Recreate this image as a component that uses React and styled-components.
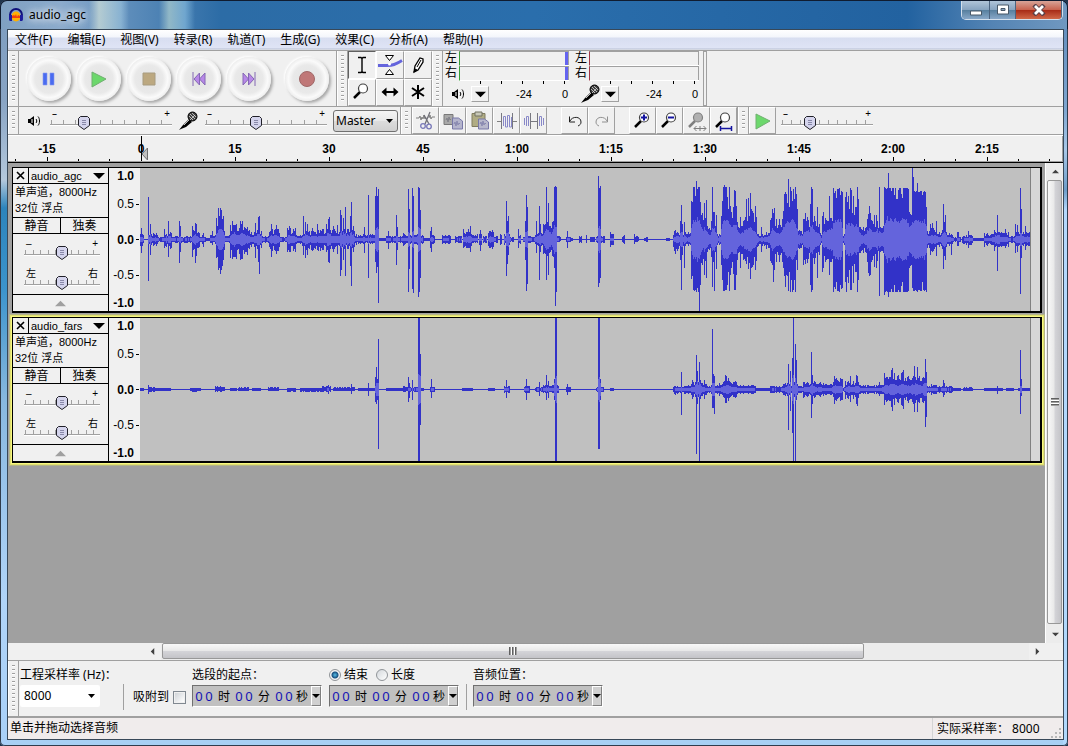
import React from 'react';
import styled, { createGlobalStyle, css } from 'styled-components';

const WAVE_WIDTH = 890;
const WAVE_HEIGHT = 143;
const WAVE_MIDDLE = 71;

// floor of the signal: from, to, up, down
const agcFloor = [
  [0, 2, 10, 12], [3, 3, 5, 4], [9, 17, 5, 5], [18, 24, 2, 2], [25, 31, 6, 8], [32, 38, 3, 3],
  [41, 45, 2, 3], [46, 51, 4, 4], [52, 59, 10, 12], [60, 65, 4, 4], [66, 69, 1, 1], [70, 75, 5, 4],
  [76, 84, 14, 18], [85, 89, 4, 3], [90, 107, 14, 17], [108, 121, 8, 8], [122, 128, 3, 3],
  [129, 139, 10, 11], [140, 146, 2, 2], [147, 155, 10, 11], [156, 161, 4, 4], [162, 180, 8, 10],
  [181, 192, 10, 10], [193, 214, 9, 8], [215, 222, 4, 4], [223, 234, 5, 4], [239, 245, 1, 1],
  [246, 262, 3, 3], [263, 283, 5, 5], [284, 289, 1, 1], [290, 294, 4, 4], [302, 310, 4, 4],
  [315, 321, 3, 3], [323, 331, 7, 8], [332, 337, 4, 3], [339, 341, 5, 5], [343, 346, 3, 3],
  [348, 353, 9, 9], [354, 357, 3, 3], [360, 361, 4, 4], [364, 369, 5, 5], [370, 373, 2, 2],
  [378, 380, 4, 4], [383, 394, 3, 3], [395, 402, 6, 6], [403, 414, 17, 16], [417, 420, 3, 2],
  [426, 432, 2, 2], [439, 441, 3, 3], [450, 454, 2, 2], [456, 464, 3, 3], [470, 473, 5, 5],
  [482, 484, 4, 4], [494, 498, 3, 2], [504, 507, 2, 2], [526, 529, 1, 1], [533, 544, 8, 12],
  [545, 550, 7, 6], [551, 566, 34, 33], [567, 576, 16, 15], [577, 580, 5, 5], [581, 596, 32, 34],
  [597, 603, 16, 18], [604, 616, 27, 26], [617, 629, 6, 8], [630, 642, 20, 22], [643, 657, 36, 36],
  [658, 662, 8, 8], [663, 674, 21, 22], [675, 679, 18, 18], [680, 681, 5, 4], [682, 692, 25, 26],
  [693, 702, 51, 52], [703, 704, 5, 5], [705, 718, 38, 38], [719, 725, 12, 13], [726, 737, 22, 25],
  [738, 743, 12, 12], [744, 768, 51, 52], [769, 771, 24, 25], [772, 786, 48, 51], [787, 793, 10, 10],
  [794, 806, 8, 8], [807, 812, 5, 5], [813, 820, 2, 2], [822, 832, 4, 5], [833, 843, 1, 1],
  [844, 853, 5, 5], [854, 868, 8, 8], [869, 874, 3, 3], [875, 889, 9, 8],
];

// single columns that stand out: x, up, down
const agcPeaks = [
  [8, 42, 41], [10, 15, 15], [24, 10, 8], [28, 18, 17], [39, 18, 23], [40, 13, 12], [52, 13, 17],
  [55, 16, 23], [56, 15, 16], [63, 6, 7], [72, 8, 5], [76, 21, 18], [78, 31, 30], [79, 23, 28],
  [80, 31, 34], [81, 29, 30], [82, 20, 26], [83, 23, 20], [92, 18, 19], [100, 18, 20], [102, 18, 19],
  [105, 11, 12], [115, 16, 18], [118, 22, 22], [119, 23, 34], [131, 15, 17], [136, 14, 14],
  [149, 13, 12], [163, 23, 15], [165, 17, 18], [167, 15, 15], [172, 11, 11], [177, 15, 10],
  [186, 15, 12], [188, 20, 22], [189, 22, 23], [193, 13, 12], [197, 14, 14], [200, 29, 36],
  [201, 24, 30], [203, 21, 20], [205, 32, 36], [210, 23, 26], [211, 37, 46], [213, 13, 12],
  [224, 12, 13], [228, 44, 38], [235, 43, 22], [236, 52, 33], [237, 43, 27], [238, 50, 63],
  [248, 8, 9], [256, 24, 25], [257, 12, 10], [268, 50, 52], [269, 30, 29], [272, 51, 49],
  [273, 43, 53], [278, 52, 57], [279, 51, 52], [280, 29, 38], [290, 8, 8], [291, 12, 12],
  [323, 10, 8], [328, 10, 8], [330, 13, 12], [340, 9, 11], [360, 5, 5], [366, 38, 36],
  [367, 18, 24], [368, 23, 15], [378, 10, 8], [385, 18, 20], [386, 44, 51], [387, 32, 44],
  [396, 18, 13], [399, 33, 40], [400, 15, 12], [406, 52, 40], [408, 36, 35], [414, 52, 28],
  [415, 53, 66], [416, 52, 52], [427, 8, 8], [446, 4, 3], [458, 63, 47], [459, 51, 43],
  [460, 53, 38], [470, 7, 7], [494, 5, 4], [540, 18, 20], [541, 34, 50], [542, 15, 15],
  [544, 17, 28], [551, 38, 39], [553, 52, 50], [554, 52, 51], [555, 43, 50], [556, 58, 52],
  [557, 50, 48], [558, 52, 52], [559, 52, 71], [560, 37, 45], [572, 52, 47], [573, 27, 22],
  [574, 27, 51], [576, 24, 29], [582, 38, 40], [583, 52, 51], [584, 54, 51], [585, 52, 50],
  [586, 52, 50], [587, 42, 45], [589, 52, 51], [594, 49, 50], [595, 48, 50], [600, 22, 28],
  [606, 40, 24], [608, 41, 29], [610, 46, 39], [615, 33, 30], [621, 12, 12], [632, 30, 25],
  [633, 26, 42], [634, 31, 30], [644, 45, 36], [645, 47, 47], [646, 45, 35], [648, 60, 51],
  [650, 52, 52], [651, 48, 40], [652, 38, 52], [653, 50, 50], [655, 52, 52], [656, 45, 20],
  [663, 20, 25], [665, 26, 24], [670, 35, 45], [671, 52, 52], [672, 50, 50], [677, 32, 38],
  [682, 23, 32], [689, 43, 35], [706, 47, 52], [710, 51, 50], [711, 49, 50], [717, 52, 52],
  [728, 25, 33], [729, 33, 36], [730, 26, 35], [739, 52, 56], [744, 52, 55], [748, 66, 57],
  [756, 40, 52], [757, 40, 52], [772, 71, 48], [773, 62, 51], [777, 56, 52], [782, 44, 42],
  [786, 32, 52], [790, 15, 15], [792, 16, 12], [796, 18, 16], [803, 35, 29], [804, 17, 16],
  [805, 24, 20], [811, 5, 15], [817, 7, 6], [818, 7, 6], [828, 8, 8], [844, 6, 7], [854, 9, 11],
  [857, 24, 31], [865, 10, 8], [875, 15, 13], [877, 14, 12], [880, 51, 54], [881, 30, 18],
  [885, 13, 10],
];

const farsFloor = [
  [0, 3, 1, 1], [8, 14, 2, 2], [15, 30, 1, 1], [50, 60, 1, 2], [75, 84, 3, 2], [90, 96, 1, 1],
  [98, 108, 2, 1], [112, 120, 1, 1], [128, 138, 2, 1], [147, 155, 1, 2], [160, 181, 1, 2],
  [182, 190, 3, 2], [193, 214, 2, 1], [218, 234, 1, 1], [246, 262, 1, 1], [263, 267, 3, 2],
  [270, 283, 2, 2], [290, 294, 2, 2], [322, 332, 1, 1], [348, 354, 1, 1], [364, 369, 3, 3],
  [384, 389, 3, 3], [395, 402, 2, 2], [403, 418, 4, 3], [426, 430, 2, 2], [456, 463, 2, 2],
  [470, 473, 1, 1], [533, 545, 3, 4], [546, 551, 4, 4], [552, 565, 8, 8], [566, 577, 4, 4],
  [578, 582, 6, 6], [583, 588, 12, 12], [589, 596, 7, 7], [597, 615, 4, 4], [616, 629, 1, 1],
  [630, 642, 3, 3], [643, 657, 6, 6], [658, 662, 3, 3], [663, 679, 7, 7], [680, 692, 6, 6],
  [693, 702, 10, 10], [703, 704, 2, 2], [705, 718, 7, 8], [719, 743, 4, 4], [744, 768, 15, 14],
  [769, 771, 9, 9], [772, 786, 14, 15], [787, 798, 4, 4], [799, 812, 3, 3], [813, 820, 1, 1],
  [823, 832, 2, 1], [844, 862, 1, 1], [866, 873, 1, 1], [878, 889, 1, 1],
];

const farsPeaks = [
  [8, 4, 4], [188, 4, 4], [211, 5, 4], [228, 6, 6], [235, 12, 12], [236, 22, 14], [237, 10, 10],
  [238, 50, 59], [268, 12, 12], [269, 6, 8], [272, 9, 10], [278, 71, 71], [279, 71, 71],
  [280, 35, 35], [291, 10, 8], [366, 9, 8], [386, 10, 10], [399, 7, 6], [406, 14, 10],
  [408, 8, 8], [414, 10, 10], [415, 71, 71], [416, 71, 71], [427, 5, 5], [458, 71, 59],
  [459, 71, 59], [460, 10, 10], [541, 17, 25], [556, 34, 64], [557, 18, 14], [559, 27, 71],
  [572, 60, 18], [573, 15, 18], [574, 13, 24], [585, 14, 13], [648, 25, 40], [650, 18, 21],
  [652, 31, 43], [653, 71, 71], [655, 45, 71], [656, 29, 10], [663, 7, 8], [671, 37, 28],
  [672, 14, 14], [694, 13, 14], [710, 13, 12], [716, 14, 14], [717, 13, 16], [739, 7, 6],
  [751, 19, 17], [752, 21, 21], [763, 19, 19], [774, 23, 22], [777, 22, 22], [785, 30, 37],
  [786, 17, 27], [803, 9, 7], [804, 6, 5], [857, 3, 4], [880, 39, 24], [881, 10, 6],
];

const jitter = (n) => {
  const v = Math.sin(n * 12.9898) * 43758.5453;
  return v - Math.floor(v);
};

const buildWave = (floor, peaks) => {
  const columns = Array.from({ length: WAVE_WIDTH }, () => [0, 0]);
  floor.forEach(([from, to, up, down]) => {
    for (let x = from; x <= to; x += 1) {
      // loud parts are nearly flat on top
      const size = up > 45 ? 1 - jitter(x) ** 4 * 0.2 : 0.5 + jitter(x) * 0.65;
      columns[x] = [Math.round(up * size), Math.round(down * size)];
    }
  });
  peaks.forEach(([x, up, down]) => {
    columns[x] = [up, down];
  });

  let peakPath = '';
  let rmsPath = '';
  columns.forEach(([up, down], x) => {
    const near = columns.slice(Math.max(0, x - 2), x + 3);
    const mean = near.reduce((sum, c) => sum + c[0] + c[1], 0) / near.length / 2;
    const share = 0.34 + jitter(x + 7) * 0.1;
    const rms = Math.floor(Math.min(mean * share, up * 0.6, down * 0.6));
    peakPath += `M${x} ${WAVE_MIDDLE - up}h1v${up + down + 1}h-1z`;
    if (rms > 0) {
      rmsPath += `M${x} ${WAVE_MIDDLE - rms}h1v${rms * 2 + 1}h-1z`;
    }
  });
  return { peakPath, rmsPath };
};

const tracks = [
  { name: 'audio_agc', selected: false, wave: buildWave(agcFloor, agcPeaks) },
  { name: 'audio_fars', selected: true, wave: buildWave(farsFloor, farsPeaks) },
];

const menus = ['文件(F)', '编辑(E)', '视图(V)', '转录(R)', '轨道(T)', '生成(G)', '效果(C)', '分析(A)', '帮助(H)'];
const marks = ['-15', '0', '15', '30', '45', '1:00', '1:15', '1:30', '1:45', '2:00', '2:15', ''];

/* icons */

const Logo = () => (
  <svg width="16" height="16" viewBox="0 0 16 16">
    <path d="M2 10V8a6 6 0 0 1 12 0v2" fill="none" stroke="#10107a" strokeWidth="2" />
    <ellipse cx="8" cy="9.500" rx="4.500" ry="5" fill="#ffb000" />
    <path d="M4 9l2-1 1 1 1-2 1 3 1-2 2 1v2H4z" fill="#f04010" />
    <path d="M1 8h3v6H2a2 2 0 0 1-1-2zM15 8h-3v6h2a2 2 0 0 0 1-2z" fill="#1c1c9c" />
  </svg>
);

const PauseIcon = () => (
  <svg width="16" height="16" viewBox="0 0 16 16">
    <path d="M2 2h4v12H2zM9 2h4v12H9z" fill="#4a6cf0" stroke="#8c9cf0" strokeWidth="0.600" />
  </svg>
);
const PlayIcon = () => (
  <svg width="18" height="18" viewBox="0 0 18 18">
    <path d="M2 2l14 7-14 8z" fill="#6cd86c" stroke="#70b070" strokeWidth="1" />
  </svg>
);
const StopIcon = () => (
  <svg width="16" height="16" viewBox="0 0 16 16">
    <path d="M2 2h12v12H2z" fill="#bca880" stroke="#a89c80" />
  </svg>
);
const BackIcon = () => (
  <svg width="16" height="16" viewBox="0 0 16 16">
    <path d="M2 1v14M8.500 2v12L3 8zM14 2v12L8.500 8z" fill="#b888e8" stroke="#8468b4" />
  </svg>
);
const ForwardIcon = () => (
  <svg width="16" height="16" viewBox="0 0 16 16">
    <path d="M14 1v14M7.500 2v12L13 8zM2 2v12L7.500 8z" fill="#b888e8" stroke="#8468b4" />
  </svg>
);
const RecordIcon = () => (
  <svg width="18" height="18" viewBox="0 0 18 18">
    <circle cx="9" cy="9" r="7.500" fill="#c07878" stroke="#a06868" />
  </svg>
);

const BeamIcon = () => (
  <svg width="22" height="22" viewBox="0 0 22 22">
    <path d="M7 3.500h3l1 1 1-1h3M7 18.500h3l1-1 1 1h3M11 4v14" fill="none" stroke="#000" strokeWidth="1.400" />
  </svg>
);
const EnvelopeIcon = () => (
  <svg width="26" height="24" viewBox="0 0 26 24">
    <path d="M1 12.500h9c6 0 8-1 15-5" fill="none" stroke="#6464dc" strokeWidth="3" />
    <path d="M8.500 2.500h8l-4 5zM8.500 21.500h8l-4-5z" fill="#fff" stroke="#000" />
    <circle cx="12.500" cy="11" r="1.500" fill="#fff" />
  </svg>
);
const PencilIcon = () => (
  <svg width="20" height="20" viewBox="0 0 20 20">
    <path d="M6 17l1-6 5-8 3 1v3l-5 8z" fill="#fff" stroke="#000" strokeWidth="1.300" />
    <path d="M9 12l4-7M6 17l1-3 2 1z" fill="#000" stroke="#000" />
  </svg>
);
const MoveIcon = () => (
  <svg width="20" height="20" viewBox="0 0 20 20">
    <path d="M3 10h14" stroke="#000" strokeWidth="2" />
    <path d="M1.500 10l5-4.500v9zM18.500 10l-5-4.500v9z" fill="#000" />
  </svg>
);
const StarIcon = () => (
  <svg width="20" height="20" viewBox="0 0 20 20">
    <path d="M10 3v14M4 6l12 8M16 6L4 14" fill="none" stroke="#000" strokeWidth="2" />
  </svg>
);

const lensMarks = {
  plus: <path d="M9 7.500h6M12 4.500v6" stroke="#1414a0" strokeWidth="2" />,
  minus: <path d="M9 7.500h6" stroke="#1414a0" strokeWidth="2" />,
  selection: <path d="M8 18.500h12M10.500 16L8 18.500l2.500 2.500M17.500 16l2.500 2.500-2.500 2.500M14 16v5" fill="none" stroke="#808080" />,
  project: <path d="M7 18.500h12M7.500 16v5M18.500 16v5" fill="none" stroke="#1414a0" strokeWidth="1.500" />,
};
const ZoomIcon = ({ kind }) => {
  const dim = kind === 'selection';
  return (
    <svg width="22" height="22" viewBox="0 0 22 22">
      <path d="M9 11l-6 6" stroke={dim ? '#808080' : '#000'} strokeWidth="2.500" />
      <circle cx="12" cy="7.500" r="4.500" fill={dim ? '#b0b0b0' : '#fff'} stroke={dim ? '#808080' : '#404040'} strokeWidth="1.200" />
      {lensMarks[kind]}
    </svg>
  );
};

const SpeakerIcon = () => (
  <svg width="16" height="16" viewBox="0 0 16 16">
    <path d="M2 6h2l4-3v10L4 10H2z" fill="#000" />
    <path d="M6 6v4" stroke="#fff" />
    <path d="M10 6c1 1 1 3 0 4M12 3.500c2 2 2 7 0 9" fill="none" stroke="#000" />
  </svg>
);
const MicIcon = () => (
  <svg width="21" height="20" viewBox="0 0 21 20">
    <path d="M1 19l4-5 6-6 3 3-6 5-5 2z" fill="#000" />
    <path d="M6 14l5-5" stroke="#c0c0c0" />
    <circle cx="14.500" cy="5.500" r="4.500" fill="#404040" stroke="#000" />
    <path d="M12 3l5 5M14 2l4 4M11 5l4 4M17 4l-5 5" stroke="#d8d8d8" strokeWidth="0.800" />
  </svg>
);

const CutIcon = () => (
  <svg width="22" height="22" viewBox="0 0 22 22">
    <path d="M1 8h3l1-2 1 4 1-3 1 2 1-4 1 4 1-2M14 8l1-3 1 4 1-2h3" fill="none" stroke="#808080" />
    <path d="M15 2l-5 12M9 5l5 9" stroke="#707078" strokeWidth="1.300" />
    <circle cx="8" cy="16" r="2.300" fill="none" stroke="#7878b8" strokeWidth="1.300" />
    <circle cx="14" cy="16.500" r="2.300" fill="none" stroke="#7878b8" strokeWidth="1.300" />
  </svg>
);
const CopyIcon = () => (
  <svg width="22" height="22" viewBox="0 0 22 22">
    <path d="M2 4.500h9v10H2z" fill="#a8a8a8" stroke="#787878" />
    <path d="M4 10l1-2 1 4 1-5 1 3 1-1" fill="none" stroke="#808088" />
    <path d="M10.500 8h6l4 3v8h-10z" fill="#b4b4cc" stroke="#7878a8" />
    <path d="M12 14l1-2 1 4 1-5 1 4 1-2 1 1" fill="none" stroke="#8888b0" />
  </svg>
);
const PasteIcon = () => (
  <svg width="22" height="22" viewBox="0 0 22 22">
    <path d="M3 3.500h13v13H3z" fill="#b0ac84" stroke="#807c60" />
    <path d="M6 2h7v4H6z" fill="#c8c8b8" stroke="#707060" />
    <path d="M9.500 9h6l4 3v7h-10z" fill="#b8b8cc" stroke="#7878a8" />
    <path d="M11 14l1-2 1 4 1-5 1 4 1-2 1 1" fill="none" stroke="#8888b0" />
  </svg>
);
const TrimIcon = () => (
  <svg width="22" height="22" viewBox="0 0 22 22">
    <path d="M1 11.500h5M16 11.500h5" stroke="#808080" />
    <path d="M5.500 3v16M16.500 3v16" stroke="#787880" />
    <path d="M7.500 16V6.500h2V17h2V5.500h2V17h2V7" fill="none" stroke="#8888c8" />
  </svg>
);
const SilenceIcon = () => (
  <svg width="22" height="22" viewBox="0 0 22 22">
    <path d="M1.500 8v7M3.500 16V6.500h2V16M16.500 16V6.500h2V16M20.500 8v7" fill="none" stroke="#8888c8" />
    <path d="M8 11.500h6M7.500 3v16M14.500 3v16" stroke="#787880" />
  </svg>
);
const TurnIcon = ({ redo }) => (
  <svg width="18" height="18" viewBox="0 0 18 18" transform={redo ? 'scale(-1 1)' : undefined}>
    <path d="M4 9c2-5 11-5 11 1 0 2-1 3-3 4M3.500 4.500V10H9" fill="none" stroke={redo ? '#909090' : '#202020'} />
  </svg>
);
const Arrow = ({ size = 10, color = '#000', turn = 0 }) => (
  <svg width={size} height={size} viewBox="0 0 10 10">
    <path d="M0 2.500h10l-5 5z" fill={color} transform={`rotate(${turn} 5 5)`} />
  </svg>
);
const CursorMark = () => (
  <svg width="9" height="25" viewBox="0 0 9 25">
    <path d="M6.500 12v12L1 18z" fill="#c0c0c0" stroke="#707070" />
    <path d="M0.500 0v25" stroke="#000" />
  </svg>
);

/* parts */

const Slider = ({ label, width, value, low = '–', high = '+' }) => (
  <SliderBox $width={width}>
    <SliderEnds aria-hidden="true">
      <span>{low}</span>
      <span>{high}</span>
    </SliderEnds>
    <Range type="range" min="0" max="100" defaultValue={value} aria-label={label} />
  </SliderBox>
);

const MeterPanel = ({ label, icon, edge, peak }) => (
  <Meter>
    <Channels>
      <span>左</span>
      <Bar $edge={edge} $peak={peak} />
      <span>右</span>
      <Bar $edge={edge} $peak={peak} />
    </Channels>
    <MeterScale />
    <MeterFoot>
      {icon}
      <DropButton aria-label={label}><Arrow size={11} /></DropButton>
      <MeterNumbers>
        <span>-24</span>
        <span>0</span>
      </MeterNumbers>
    </MeterFoot>
  </Meter>
);

const TimeBox = ({ label }) => (
  <TimeField role="group" aria-label={label}>
    {['时', '分', '秒'].map((unit) => (
      <React.Fragment key={unit}>
        <Digit defaultValue="0" maxLength={1} aria-label={`${label} ${unit} 1`} />
        <Digit defaultValue="0" maxLength={1} aria-label={`${label} ${unit} 2`} />
        <Unit>{unit}</Unit>
      </React.Fragment>
    ))}
    <TimeButton aria-label={`${label} 格式`}><Arrow size={8} /></TimeButton>
  </TimeField>
);

const Track = ({ track }) => (
  <TrackBox $selected={track.selected}>
    <TrackPanel>
      <TrackTitle>
        <CloseTrack aria-label="关闭">
          <svg width="9" height="9" viewBox="0 0 9 9">
            <path d="M1 1l7 7M8 1L1 8" stroke="#000" strokeWidth="1.600" />
          </svg>
        </CloseTrack>
        <TrackName>
          {track.name}
          <Arrow size={12} />
        </TrackName>
      </TrackTitle>
      <TrackInfo>
        <div>单声道，8000Hz</div>
        <div>32位 浮点</div>
      </TrackInfo>
      <MuteRow>
        <MuteButton>静音</MuteButton>
        <MuteButton>独奏</MuteButton>
      </MuteRow>
      <TrackSliders>
        <Slider label={`${track.name} 增益`} width={76} value={50} />
        <Slider label={`${track.name} 声像`} width={76} value={50} low="左" high="右" />
      </TrackSliders>
      <Collapse aria-label="折叠"><Arrow size={11} color="#a0a0a0" turn={180} /></Collapse>
    </TrackPanel>
    <LevelRuler>
      <Level $strong>1.0</Level>
      <Level $tick>0.5</Level>
      <Level $strong $tick>0.0</Level>
      <Level $tick>-0.5</Level>
      <Level $strong>-1.0</Level>
    </LevelRuler>
    <Clip>
      <svg width="100%" height={WAVE_HEIGHT} viewBox={`0 0 ${WAVE_WIDTH} ${WAVE_HEIGHT}`} preserveAspectRatio="none" shapeRendering="crispEdges">
        <path d={track.wave.peakPath} fill="#3232c8" />
        <path d={track.wave.rmsPath} fill="#6464dc" />
      </svg>
    </Clip>
    <ClipEnd />
  </TrackBox>
);

const App = () => (
  <Frame>
    <GlobalStyle />
    <TitleBar>
      <Logo />
      <Title>audio_agc</Title>
      <WindowButtons>
        <WindowButton aria-label="最小化" $width={28}>
          <svg width="12" height="12" viewBox="0 0 12 12"><path d="M0.500 7h11v4H0.500z" fill="#fff" stroke="#485868" /></svg>
        </WindowButton>
        <WindowButton aria-label="最大化" $width={26}>
          <svg width="12" height="12" viewBox="0 0 12 12"><path d="M0.500 1h11v9H0.500zM4 4.500h4v2H4z" fill="#fff" fillRule="evenodd" stroke="#485868" /></svg>
        </WindowButton>
        <WindowButton aria-label="关闭" $width={46} $close>
          <svg width="14" height="12" viewBox="0 0 14 12">
            <path d="M2 1l10 10M12 1L2 11" stroke="#584048" strokeWidth="4.500" />
            <path d="M3 2l8 8M11 2l-8 8" stroke="#fff" strokeWidth="2.800" />
          </svg>
        </WindowButton>
      </WindowButtons>
    </TitleBar>
    <Client>
      <MenuBar>
        {menus.map((menu) => <MenuItem key={menu}>{menu}</MenuItem>)}
      </MenuBar>

      <ToolRow $height={56}>
        <Grip />
        <Transport>
          <RoundButton aria-label="暂停"><PauseIcon /></RoundButton>
          <RoundButton aria-label="播放"><PlayIcon /></RoundButton>
          <RoundButton aria-label="停止"><StopIcon /></RoundButton>
          <RoundButton aria-label="跳至开头"><BackIcon /></RoundButton>
          <RoundButton aria-label="跳至结尾"><ForwardIcon /></RoundButton>
          <RoundButton aria-label="录制" $apart><RecordIcon /></RoundButton>
        </Transport>
        <Grip />
        <ToolGrid>
          <ToolButton aria-label="选择工具" $pressed><BeamIcon /></ToolButton>
          <ToolButton aria-label="包络工具"><EnvelopeIcon /></ToolButton>
          <ToolButton aria-label="绘制工具"><PencilIcon /></ToolButton>
          <ToolButton aria-label="缩放工具"><ZoomIcon kind="none" /></ToolButton>
          <ToolButton aria-label="时间移动工具"><MoveIcon /></ToolButton>
          <ToolButton aria-label="多功能工具"><StarIcon /></ToolButton>
        </ToolGrid>
        <Grip />
        <Meters>
          <MeterPanel label="输出电平" icon={<SpeakerIcon />} edge="#38a038" peak />
          <MeterPanel label="输入电平" icon={<MicIcon />} edge="#a03848" />
        </Meters>
      </ToolRow>

      <ToolRow $height={28}>
        <Grip />
        <Mixer>
          <IconCell $width={18}><SpeakerIcon /></IconCell>
          <Slider label="输出音量" width={122} value={25} />
          <IconCell $width={21}><MicIcon /></IconCell>
          <Slider label="输入音量" width={122} value={41} />
          <SourceSelect aria-label="输入源" defaultValue="Master">
            <option>Master</option>
          </SourceSelect>
        </Mixer>
        <Grip />
        <ButtonStrip>
          <ToolButton aria-label="剪切"><CutIcon /></ToolButton>
          <ToolButton aria-label="复制"><CopyIcon /></ToolButton>
          <ToolButton aria-label="粘贴"><PasteIcon /></ToolButton>
          <ToolButton aria-label="修剪"><TrimIcon /></ToolButton>
          <ToolButton aria-label="静音选区"><SilenceIcon /></ToolButton>
          <StripGap />
          <ToolButton aria-label="撤销"><TurnIcon /></ToolButton>
          <ToolButton aria-label="重做"><TurnIcon redo /></ToolButton>
          <StripGap />
          <ToolButton aria-label="放大"><ZoomIcon kind="plus" /></ToolButton>
          <ToolButton aria-label="缩小"><ZoomIcon kind="minus" /></ToolButton>
          <ToolButton aria-label="适合选区"><ZoomIcon kind="selection" /></ToolButton>
          <ToolButton aria-label="适合项目"><ZoomIcon kind="project" /></ToolButton>
        </ButtonStrip>
        <Grip />
        <PlaySpeed>
          <ToolButton aria-label="按速度播放"><PlayIcon /></ToolButton>
          <Slider label="播放速度" width={92} value={29} />
        </PlaySpeed>
      </ToolRow>

      <Timeline>
        {marks.map((mark, i) => (
          <Mark key={mark || 'end'} $last={i === marks.length - 1}>
            {mark}
            {mark === '0' && <Cursor><CursorMark /></Cursor>}
          </Mark>
        ))}
      </Timeline>

      <Workspace>
        <TrackList>
          {tracks.map((track) => <Track key={track.name} track={track} />)}
        </TrackList>
        <ScrollColumn>
          <ScrollArrow aria-label="向上"><Arrow size={7} color="#404040" turn={180} /></ScrollArrow>
          <ScrollThumb $vertical><ThumbMarks $vertical /></ScrollThumb>
          <ScrollArrow aria-label="向下"><Arrow size={7} color="#404040" /></ScrollArrow>
        </ScrollColumn>
      </Workspace>
      <ScrollRow>
        <ScrollArrow aria-label="向左"><Arrow size={7} color="#404040" turn={90} /></ScrollArrow>
        <ScrollTrack>
          <ScrollThumb><ThumbMarks /></ScrollThumb>
        </ScrollTrack>
        <ScrollArrow aria-label="向右"><Arrow size={7} color="#404040" turn={270} /></ScrollArrow>
      </ScrollRow>

      <SelectionBar>
        <Grip />
        <RateGroup>
          <label htmlFor="rate">工程采样率 (Hz)：</label>
          <RateSelect id="rate" defaultValue="8000">
            <option>8000</option>
          </RateSelect>
        </RateGroup>
        <Divider />
        <SnapLabel>
          吸附到
          <Checkbox type="checkbox" />
        </SnapLabel>
        <TimeGroup>
          <span>选段的起点：</span>
          <TimeBox label="选段的起点" />
        </TimeGroup>
        <TimeGroup>
          <RadioRow>
            <label><Radio type="radio" name="end" defaultChecked />结束</label>
            <label><Radio type="radio" name="end" />长度</label>
          </RadioRow>
          <TimeBox label="结束" />
        </TimeGroup>
        <Divider />
        <TimeGroup>
          <span>音频位置：</span>
          <TimeBox label="音频位置" />
        </TimeGroup>
      </SelectionBar>

      <StatusBar>
        <StatusText>单击并拖动选择音频</StatusText>
        <StatusRate>
          实际采样率： 8000
          <svg width="11" height="11" viewBox="0 0 11 11">
            <path d="M8 0h2v2H8zM4 4h2v2H4zM8 4h2v2H8zM0 8h2v2H0zM4 8h2v2H4zM8 8h2v2H8z" fill="#b8b8b8" />
          </svg>
        </StatusRate>
      </StatusBar>
    </Client>
  </Frame>
);

export default App;

const GlobalStyle = createGlobalStyle`
* {
  box-sizing: border-box;
}
body {
  margin: 0;
  background: #20344c;
  color: #000;
  font-family: "Noto Sans", "Noto Sans CJK SC", sans-serif;
  font-size: 12px;
  line-height: 16px;
}
button, input, select {
  margin: 0;
  padding: 0;
  border: 0;
  border-radius: 0;
  background: none;
  color: inherit;
  font: inherit;
}
svg {
  display: block;
  flex: none;
}
`;

const Frame = styled.div`
display: flex;
flex-direction: column;
min-height: 100vh;
padding: 0 4px 6px 7px;
border-radius: 7px 7px 5px 5px;
background:
  linear-gradient(#5c88b8, #7ea6d0 110px, #a8c8e8 150px, #6c9cc8 190px, #b4d8fc 210px, #b0d8fc) right / 5px 100% no-repeat,
  linear-gradient(#7c9cc0, #88a4c4 100px, #b4c8dc 180px, #2c84bc 208px, #3c94cc 290px, #88b8e0 400px, #b0d4f8 600px, #a8d0f8) left / 8px 100% no-repeat,
  #a8d0f4;
box-shadow: inset 0 0 0 1px #303c4c;
`;

const TitleBar = styled.header`
display: flex;
align-items: center;
height: 29px;
margin: 0 -4px 0 -7px;
padding: 0 4px 0 7px;
border: 1px solid #101c30;
border-bottom: 0;
border-radius: 7px 7px 0 0;
background:
  linear-gradient(90deg, transparent 88px, rgba(208, 224, 216, 0.7) 98px, rgba(160, 200, 224, 0.6) 120px, transparent 128px, transparent 158px, rgba(176, 208, 208, 0.7) 168px, rgba(144, 196, 228, 0.6) 184px, transparent 194px),
  linear-gradient(90deg, #7fa0c2, #8cabcc 60px, #5c8cba 130px, #2c6ca6 220px, #2a6eac 50%, #2262a0 85%, #5484b4 93%, #7098c0);
`;

const Title = styled.h1`
margin: 0 auto 0 5px;
font-size: 12px;
font-weight: normal;
text-shadow: 0 0 8px #fff, 0 0 8px #fff;
`;

const WindowButtons = styled.div`
display: flex;
align-self: flex-start;
border: 1px solid #d4e0ec;
border-top: 0;
border-radius: 0 0 5px 5px;
overflow: hidden;
`;

const WindowButton = styled.button`
display: flex;
align-items: center;
justify-content: center;
width: ${(props) => props.$width}px;
height: 18px;
border-right: 1px solid #4c6480;
background: ${(props) => (props.$close
    ? 'linear-gradient(#d8a498, #c86450 48%, #a82c18 52%, #d06848)'
    : 'linear-gradient(#b0c4d8, #88a4c0 48%, #58809f 52%, #88a8c8)')};
`;

const Client = styled.main`
display: flex;
flex: 1;
flex-direction: column;
border: 1px solid #384858;
background: #f0f0f0;
`;

const MenuBar = styled.nav`
display: flex;
gap: 1px;
height: 21px;
border-bottom: 1px solid #a0a0a0;
background: linear-gradient(#fff, #f4f6fb 7px, #d8def0 8px, #dfe4f5 18px, #b8c0d4 19px, #f0f0f0 20px);
`;

const MenuItem = styled.button`
padding: 0 7px;
line-height: 20px;
`;

const ToolRow = styled.div`
display: flex;
height: ${(props) => props.$height}px;
border-bottom: 1px solid #a0a0a0;
`;

const Grip = styled.div`
flex: none;
width: 11px;
padding: 4px 3px;
border-right: 1px solid #a0a0a0;
border-left: 1px solid #fff;
background: repeating-linear-gradient(#a0a0a0 0 1px, #fff 1px 2px, #f0f0f0 2px 4px) content-box;
`;

const Transport = styled.div`
display: flex;
flex: none;
gap: 6px;
align-items: center;
width: 318px;
padding-left: 8px;
border-right: 1px solid #a0a0a0;
`;

const RoundButton = styled.button`
display: flex;
align-items: center;
justify-content: center;
width: 44px;
height: 44px;
margin-left: ${(props) => (props.$apart ? '8px' : 0)};
border-radius: 50%;
background: radial-gradient(circle, #e4e4e4 0, #e9e9e9 45%, #fafafa 60%, #ececec 72%);
box-shadow: 2px 2px 3px #a8a8a8, -1px -1px 2px #fff;
`;

const ToolGrid = styled.div`
display: grid;
grid-template-columns: repeat(3, 28px);
grid-auto-rows: 1fr;
`;

const ToolButton = styled.button`
display: flex;
align-items: center;
justify-content: center;
min-width: 27px;
border: 1px solid;
border-color: #fff #a0a0a0 #a0a0a0 #fff;
${(props) => props.$pressed && css`
  border-color: #606060 #fff #fff #606060;
`}
`;

const Meters = styled.div`
display: flex;
width: 261px;
padding-left: 2px;
border-right: 1px solid #a0a0a0;
box-shadow: 3px 0 0 -1px #f0f0f0, 3px 0 0 #a0a0a0;
`;

const Meter = styled.div`
flex: none;
width: 130px;
padding-right: 6px;
`;

const Channels = styled.div`
display: grid;
grid-template-columns: 14px 1fr;
grid-auto-rows: 15px;
line-height: 14px;
`;

const Bar = styled.div`
border-top: 1px solid #a0a0a0;
border-left: 1px solid ${(props) => props.$edge};
border-bottom: 1px solid #fff;
background:
  linear-gradient(${(props) => (props.$peak ? '#6464f0, #6464f0' : 'transparent, transparent')}) right 1px top / 3px 100% no-repeat,
  linear-gradient(#a0a0a0, #a0a0a0) right / 1px 100% no-repeat;
`;

const MeterScale = styled.div`
height: 3px;
margin: 0 2px 0 35px;
background: repeating-linear-gradient(90deg, #000 0 1px, transparent 1px 21px);
`;

const MeterFoot = styled.div`
display: flex;
align-items: center;
height: 20px;
padding-left: 5px;
`;

const DropButton = styled.button`
display: flex;
flex: none;
align-items: center;
justify-content: center;
width: 18px;
height: 16px;
margin-left: auto;
border: 1px solid;
border-color: #fff #a0a0a0 #a0a0a0 #fff;
`;

const MeterNumbers = styled.div`
display: flex;
flex: none;
justify-content: space-between;
width: 80px;
padding: 0 1px 0 27px;
font-family: "Liberation Sans", sans-serif;
font-size: 11px;
line-height: 16px;
`;

const Mixer = styled.div`
display: flex;
flex: none;
gap: 6px;
align-items: center;
width: 382px;
padding-left: 7px;
border-right: 1px solid #a0a0a0;
`;

const IconCell = styled.div`
width: ${(props) => props.$width}px;
`;

const SliderBox = styled.div`
width: ${(props) => props.$width}px;
`;

const SliderEnds = styled.div`
display: flex;
justify-content: space-between;
padding: 0 2px;
font-size: 10px;
line-height: 5px;
`;

const thumb = "data:image/svg+xml,%3Csvg xmlns='http://www.w3.org/2000/svg' width='12' height='14'%3E%3Cpath d='M2.500 .5h7l2 2v7L6 13.500.5 9.500v-7z' fill='%23d4d4ec' stroke='%23202028'/%3E%3Cpath d='M4 4.500h4M4 6.500h4M4 8.500h4' stroke='%238888a8'/%3E%3C/svg%3E";

const Range = styled.input`
display: block;
width: 100%;
height: 14px;
appearance: none;
background:
  linear-gradient(#a0a0a0, #a0a0a0) 0 8px / 100% 1px no-repeat,
  linear-gradient(#fff, #fff) 0 9px / 100% 1px no-repeat,
  repeating-linear-gradient(90deg, transparent 0 1px, #a0a0a0 1px 2px, transparent 2px 10%) 0 4px / 100% 4px no-repeat;

&::-webkit-slider-thumb {
  width: 12px;
  height: 14px;
  appearance: none;
  background: url("${thumb}");
}
`;

const arrowImage = "data:image/svg+xml,%3Csvg xmlns='http://www.w3.org/2000/svg' width='7' height='4'%3E%3Cpath d='M0 0h7L3.500 4z'/%3E%3C/svg%3E";

const SourceSelect = styled.select`
width: 65px;
height: 22px;
padding-left: 2px;
appearance: none;
border: 1px solid #707070;
border-radius: 3px;
background:
  url("${arrowImage}") right 4px center no-repeat,
  linear-gradient(#f4f4f4, #e8e8e8 50%, #dcdcdc 52%, #d0d0d0);
`;

const ButtonStrip = styled.div`
display: flex;
flex: none;
border-right: 1px solid #a0a0a0;
`;

const StripGap = styled.div`
width: 14px;
`;

const PlaySpeed = styled.div`
display: flex;
gap: 5px;
align-items: center;

${ToolButton} {
  align-self: stretch;
}
`;

const Timeline = styled.div`
display: flex;
height: 28px;
padding-top: 5px;
overflow: hidden;
border-top: 1px solid #fff;
border-bottom: 1px solid #000;
box-shadow: inset 0 -1px 0 #a0a0a0, inset -1px 0 0 #a0a0a0;
`;

const Mark = styled.div`
position: relative;
flex: ${(props) => (props.$last ? '1 0 20px' : '0 0 94px')};
min-width: 0;
background:
  linear-gradient(#000, #000) 47px 16px / 1px 4px no-repeat,
  linear-gradient(#000, #000) 15px 18px / 1px 2px no-repeat,
  linear-gradient(#000, #000) 78px 18px / 1px 2px no-repeat;
font-family: "Liberation Sans", sans-serif;
font-weight: bold;
text-align: center;

&:first-child {
  margin-left: -8px;
}
`;

const Cursor = styled.div`
position: absolute;
top: -5px;
left: 47px;
`;

const Workspace = styled.section`
display: flex;
flex: 1;
`;

const TrackList = styled.div`
display: flex;
flex: 1;
flex-direction: column;
gap: 4px;
min-width: 0;
padding: 4px 3px 4px 4px;
background: #a0a0a0;
`;

const TrackBox = styled.article`
display: flex;
height: 146px;
border: solid #000;
border-width: 1px 2px 2px 1px;
background: #f0f0f0;
${(props) => props.$selected && css`
  box-shadow: 0 0 0 1px #f8f880, 0 0 0 2px #dede70, 0 0 0 3px #b4b488;
`}
`;

const TrackPanel = styled.div`
display: flex;
flex: none;
flex-direction: column;
width: 96px;
border-right: 1px solid #000;
font-family: "Liberation Sans", "Noto Sans CJK SC", sans-serif;
font-size: 11px;
`;

const TrackTitle = styled.div`
display: flex;
height: 16px;
border-bottom: 1px solid #000;
`;

const CloseTrack = styled.button`
display: flex;
align-items: center;
justify-content: center;
width: 16px;
border-right: 1px solid #000;
`;

const TrackName = styled.button`
display: flex;
flex: 1;
align-items: center;
justify-content: space-between;
padding: 0 3px 0 2px;
`;

const TrackInfo = styled.div`
height: 34px;
padding-left: 2px;
border-bottom: 1px solid #000;
white-space: nowrap;
`;

const MuteRow = styled.div`
display: flex;
height: 16px;
border-bottom: 1px solid #000;
`;

const MuteButton = styled.button`
flex: 1;
font-size: 12px;
line-height: 14px;

& + & {
  border-left: 1px solid #000;
}
`;

const TrackSliders = styled.div`
display: flex;
flex-direction: column;
gap: 11px;
height: 61px;
padding: 7px 0 0 11px;
border-bottom: 1px solid #000;
`;

const Collapse = styled.button`
display: flex;
flex: 1;
align-items: center;
justify-content: center;
`;

const LevelRuler = styled.div`
display: grid;
flex: none;
grid-template-rows: 16px 40px 31px 40px 16px;
align-items: center;
width: 31px;
font-family: "Liberation Sans", sans-serif;
`;

const Level = styled.div`
padding-right: 6px;
background: ${(props) => (props.$tick ? 'linear-gradient(#000, #000) right 1px center / 3px 1px no-repeat' : 'none')};
font-weight: ${(props) => (props.$strong ? 'bold' : 'normal')};
text-align: right;
`;

const Clip = styled.div`
flex: 1;
min-width: 0;
background: #c0c0c0;
`;

const ClipEnd = styled.div`
width: 10px;
border-left: 1px solid #808080;
background: #d6d6d6;
`;

const ScrollColumn = styled.div`
display: flex;
flex-direction: column;
width: 18px;
padding: 0 1px;
border-left: 1px solid #fff;
background: #ececec;
`;

const ScrollRow = styled.div`
display: flex;
height: 18px;
padding: 0 17px 0 136px;
border-bottom: 1px solid #a0a0a0;
`;

const ScrollArrow = styled.button`
display: flex;
flex: none;
align-items: center;
justify-content: center;
width: 17px;
height: 17px;
`;

const ScrollTrack = styled.div`
flex: 1;
padding-left: 1px;
background: #ececec;
`;

const ScrollThumb = styled.div`
display: flex;
align-items: center;
justify-content: center;
border: 1px solid #989898;
border-radius: 2px;
${(props) => (props.$vertical ? css`
  flex: 1;
  width: 15px;
  margin-bottom: 2px;
  background: linear-gradient(90deg, #f8f8f8, #e8e8e8 48%, #d4d4d8 52%, #c4c4c8);
` : css`
  width: 81%;
  height: 16px;
  background: linear-gradient(#f8f8f8, #e8e8e8 48%, #d4d4d8 52%, #c4c4c8);
`)}
`;

const ThumbMarks = styled.div`
width: 8px;
height: 8px;
background: repeating-linear-gradient(${(props) => (props.$vertical ? '180deg' : '90deg')}, #606060 0 1px, #a0a0a0 1px 2px, #fff 2px 3px);
`;

const SelectionBar = styled.div`
display: flex;
height: 57px;
border-bottom: 2px solid #a0a0a0;
`;

const RateGroup = styled.div`
display: flex;
flex-direction: column;
gap: 2px;
width: 104px;
padding: 6px 0 0 1px;
white-space: nowrap;
`;

const RateSelect = styled.select`
width: 80px;
height: 22px;
padding-left: 4px;
appearance: none;
border-radius: 2px;
background: url("${arrowImage}") right 5px center no-repeat #fff;
`;

const Divider = styled.div`
align-self: flex-end;
width: 1px;
height: 26px;
margin-bottom: 6px;
background: #a0a0a0;
`;

const SnapLabel = styled.label`
display: flex;
gap: 4px;
align-items: center;
align-self: flex-end;
height: 22px;
margin-bottom: 8px;
padding: 0 6px 0 9px;
`;

const Checkbox = styled.input`
width: 13px;
height: 13px;
appearance: none;
border: 1px solid #808890;
background: linear-gradient(135deg, #d0d4d8, #fff) content-box #f8f8f8;
padding: 1px;
`;

const TimeGroup = styled.div`
display: flex;
flex-direction: column;
gap: 2px;
padding: 6px 7px 0 0;

${Divider} + & {
  padding-left: 6px;
}
`;

const TimeField = styled.div`
display: flex;
width: 130px;
height: 22px;
padding-left: 1px;
border: 1px solid;
border-color: #707070 #fff #fff #707070;
background: #c0c0c0;
`;

const Digit = styled.input`
width: 10px;
color: #1414b4;
font-size: 13px;
text-align: center;
`;

const Unit = styled.span`
width: 20px;
line-height: 22px;
text-align: center;

&:nth-last-child(2) {
  width: 16px;
}
`;

const TimeButton = styled.button`
display: flex;
align-items: center;
justify-content: center;
width: 10px;
margin-left: auto;
border: 1px solid;
border-color: #fff #808080 #808080 #fff;
background: #d0d0d0;
`;

const RadioRow = styled.div`
display: flex;
gap: 8px;

label {
  display: flex;
  gap: 3px;
  align-items: center;
}
`;

const Radio = styled.input`
width: 12px;
height: 12px;
appearance: none;
border: 1px solid #909498;
border-radius: 50%;
background: linear-gradient(135deg, #d4d8dc, #fff);

&:checked {
  background: radial-gradient(circle, #58c0e8 0, #185080 3px, #f4f4f4 4px);
}
`;

const StatusBar = styled.footer`
display: flex;
height: 21px;
background: #f0ecec;
line-height: 20px;
`;

const StatusText = styled.div`
flex: 1;
padding-left: 2px;
`;

const StatusRate = styled.div`
display: flex;
align-items: flex-end;
justify-content: space-between;
width: 131px;
padding: 0 1px 0 4px;
border-left: 1px solid #d4d4d4;
`;
